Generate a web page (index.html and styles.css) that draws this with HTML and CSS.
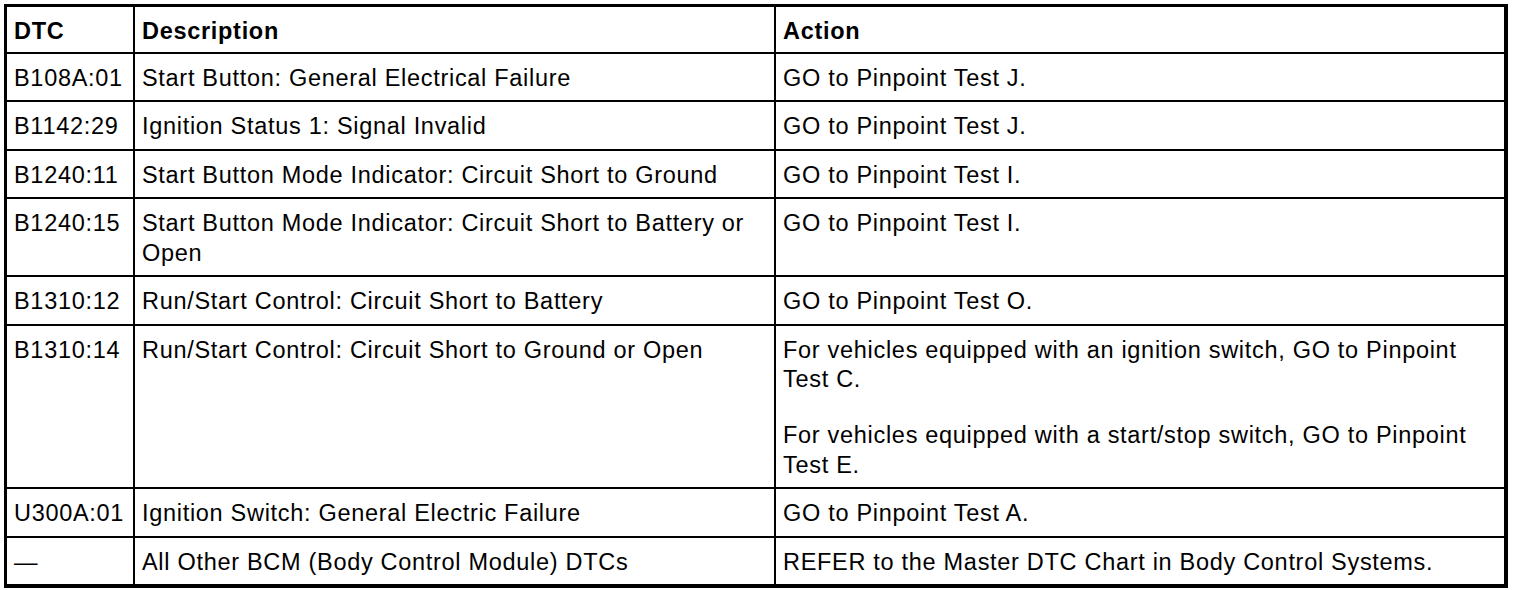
FILE: index.html
```html
<!DOCTYPE html>
<html lang="en">
<head>
<meta charset="utf-8">
<title>DTC Chart</title>
<link rel="stylesheet" href="styles.css">
</head>
<body>
<table class="dtc">
  <colgroup>
    <col class="c-dtc">
    <col class="c-desc">
    <col class="c-act">
  </colgroup>
  <thead>
    <tr><th>DTC</th><th>Description</th><th>Action</th></tr>
  </thead>
  <tbody>
    <tr><td>B108A:01</td><td>Start Button: General Electrical Failure</td><td>GO to Pinpoint Test J.</td></tr>
    <tr><td>B1142:29</td><td>Ignition Status 1: Signal Invalid</td><td>GO to Pinpoint Test J.</td></tr>
    <tr><td>B1240:11</td><td>Start Button Mode Indicator: Circuit Short to Ground</td><td>GO to Pinpoint Test I.</td></tr>
    <tr><td>B1240:15</td><td>Start Button Mode Indicator: Circuit Short to Battery or Open</td><td>GO to Pinpoint Test I.</td></tr>
    <tr><td>B1310:12</td><td>Run/Start Control: Circuit Short to Battery</td><td>GO to Pinpoint Test O.</td></tr>
    <tr><td>B1310:14</td><td>Run/Start Control: Circuit Short to Ground or Open</td><td><p>For vehicles equipped with an ignition switch, GO to Pinpoint Test C.</p><p>For vehicles equipped with a start/stop switch, GO to Pinpoint Test E.</p></td></tr>
    <tr><td>U300A:01</td><td>Ignition Switch: General Electric Failure</td><td>GO to Pinpoint Test A.</td></tr>
    <tr><td>&mdash;</td><td>All Other BCM (Body Control Module) DTCs</td><td>REFER to the Master DTC Chart in Body Control Systems.</td></tr>
  </tbody>
</table>
</body>
</html>
```
FILE: styles.css
```css
html, body {
  margin: 0;
  padding: 0;
  background: #ffffff;
}

body {
  padding: 4px 0 0 4px;
  font-family: "Liberation Sans", Arial, sans-serif;
  color: #000000;
}

.dtc {
  box-sizing: border-box;
  width: 1504px;
  table-layout: fixed;
  border-collapse: separate;
  border-spacing: 0;
  border-style: solid;
  border-color: #000;
  border-width: 3px 4px 4px 3px;
  font-size: 23.5px;
  letter-spacing: 0.7px;
  line-height: 29.5px;
}

.c-dtc { width: 128px; }
.c-desc { width: 641px; }
.c-act { width: 728px; }

.dtc th,
.dtc td {
  box-sizing: border-box;
  text-align: left;
  vertical-align: top;
  padding: 10px 8px 7px 7px;
  border-right: 2px solid #000;
  border-bottom: 2px solid #000;
}

.dtc th {
  font-weight: bold;
  padding-top: 10px;
  padding-bottom: 5px;
}

.dtc th:first-child,
.dtc td:first-child {
  padding-left: 7px;
}

.dtc th:last-child,
.dtc td:last-child {
  border-right: none;
}

.dtc tbody tr:last-child td {
  border-bottom: none;
}

.dtc p {
  margin: 0;
}

.dtc p + p {
  margin-top: 26.5px;
}
```
